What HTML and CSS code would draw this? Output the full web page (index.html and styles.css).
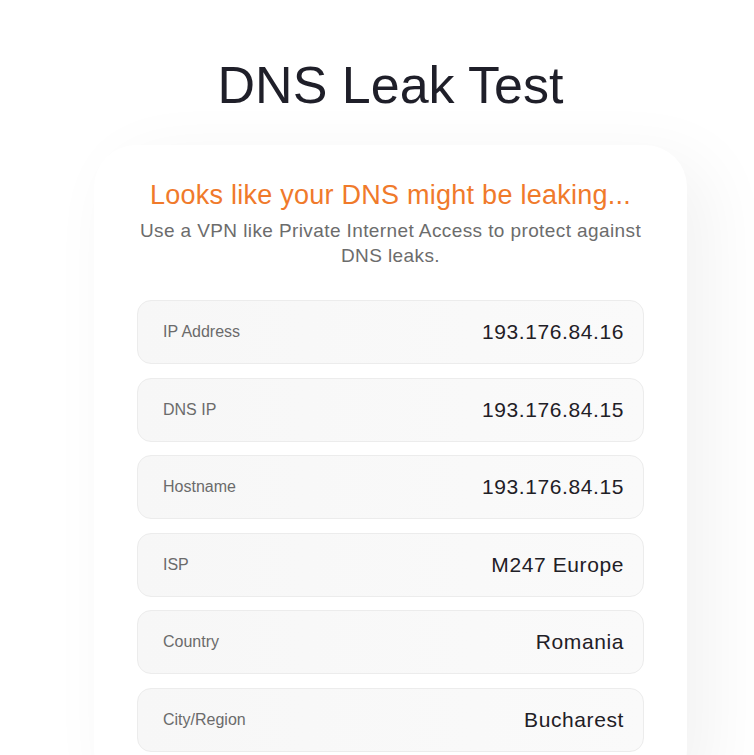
FILE: index.html
```html
<!DOCTYPE html>
<html lang="en">
<head>
<meta charset="utf-8">
<title>DNS Leak Test</title>
<link rel="stylesheet" href="styles.css">
</head>
<body>
<main class="page">
  <h1 class="title">DNS Leak Test</h1>
  <section class="card">
    <h2 class="warning">Looks like your DNS might be leaking...</h2>
    <p class="advice">Use a VPN like Private Internet Access to protect against DNS leaks.</p>
    <ul class="rows">
      <li class="row"><span class="label">IP Address</span><span class="value">193.176.84.16</span></li>
      <li class="row"><span class="label">DNS IP</span><span class="value">193.176.84.15</span></li>
      <li class="row"><span class="label">Hostname</span><span class="value">193.176.84.15</span></li>
      <li class="row"><span class="label">ISP</span><span class="value">M247 Europe</span></li>
      <li class="row"><span class="label">Country</span><span class="value">Romania</span></li>
      <li class="row"><span class="label">City/Region</span><span class="value">Bucharest</span></li>
    </ul>
  </section>
</main>
</body>
</html>
```
FILE: styles.css
```css
html, body {
  margin: 0;
  padding: 0;
  background: #ffffff;
  font-family: "Liberation Sans", Arial, sans-serif;
}

body {
  overflow: hidden;
}

.page {
  width: 593px;
  margin: 0 0 0 94px;
  padding-top: 55px;
}

.title {
  margin: 0;
  font-size: 52px;
  line-height: 60px;
  font-weight: 400;
  color: #1f1f29;
  text-align: center;
}

.card {
  margin-top: 30px;
  background: #ffffff;
  border-radius: 42px;
  box-shadow: 22px 16px 70px rgba(0, 0, 0, 0.055);
  padding: 34px 40px 40px;
  text-align: center;
}

.warning {
  margin: 0;
  font-size: 27px;
  line-height: 32px;
  font-weight: 400;
  letter-spacing: 0.25px;
  color: #f07a2b;
}

.advice {
  margin: 7px 0 0;
  font-size: 19px;
  line-height: 25px;
  letter-spacing: 0.4px;
  color: #6c6c6c;
}

.rows {
  list-style: none;
  margin: 32px 3px 0;
  padding: 0;
  display: flex;
  flex-direction: column;
  gap: 13.5px;
}

.row {
  box-sizing: border-box;
  height: 64px;
  display: flex;
  align-items: center;
  justify-content: space-between;
  padding: 0 19px 0 25px;
  border: 1px solid #ececec;
  border-radius: 14px;
  background: linear-gradient(90deg, #f7f7f7 0%, #fafafa 100%);
}

.label {
  font-size: 16px;
  color: #6b6b6b;
}

.value {
  font-size: 21px;
  letter-spacing: 0.6px;
  color: #1f2026;
}
```
